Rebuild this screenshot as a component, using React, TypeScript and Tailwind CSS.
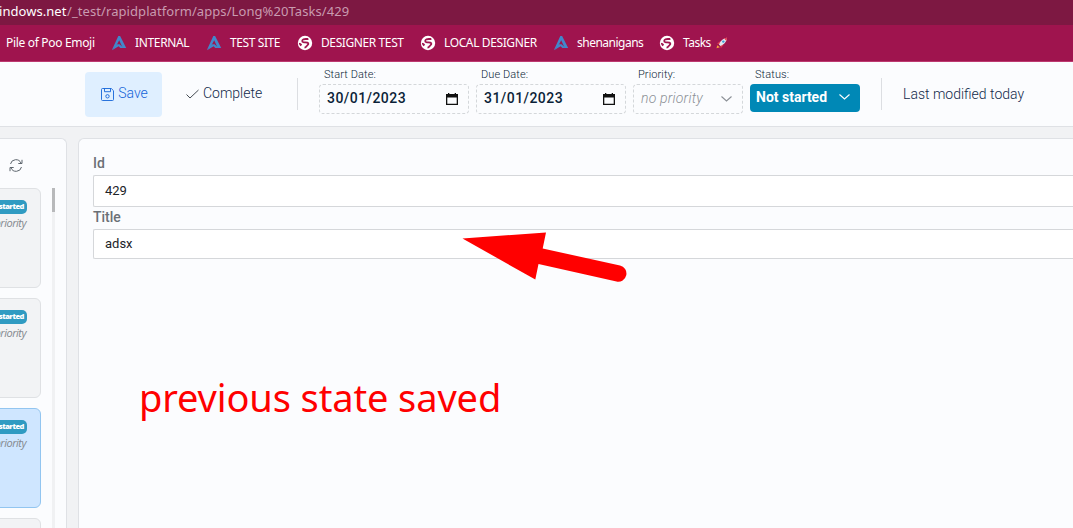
import React from "react";

const Apex = ({ cls }: { cls: string }) => (
  <svg className={`h-4 w-4 shrink-0 ${cls}`} viewBox="0 0 16 16" fill="#4287cb">
    <path d="M.8 15.2 7.3 1h1.8L15.2 13h-3.5L8.2 5.2 4.9 11.6 3 12.8Z" />
    <path d="M6.2 9.3h2.4l4 3.7H9.4L7.6 11.2 1 15.2l2-2.6Z" />
  </svg>
);

const Globe = ({ cls }: { cls: string }) => (
  <svg className={`h-4 w-4 shrink-0 ${cls}`} viewBox="0 0 16 16">
    <circle cx="8" cy="8" r="7.2" fill="#fff" />
    <path d="M11.4 3.8C9.800 4.300 8 3.700 6.500 4.300 5 5 4.700 6.700 6.300 7.200c1.600.4 4.200-.2 5 1 .7 1.500-1.200 2.300-1.900 3.200-.4.700-1 1.200-1.900 1.300" fill="none" stroke="#9f144e" strokeWidth="1.8" />
    <path d="M1.800 7.800c1.400.1 2.800.8 3.300 1.900l-1.500 1.500C2.600 10.500 2 9.200 1.800 7.800Z" fill="#9f144e" />
  </svg>
);

const Rocket = () => (
  <svg className="ml-[5px] h-3 w-3 shrink-0" viewBox="0 0 12 12">
    <path d="M1 6.5 4.5 4l3 4-2.700 3.200-.4-2.200L2.500 7Z" fill="#e23b50" />
    <path d="M3 7.600C4.300 4 7 1.500 11 .8 10.800 4.500 8 7.600 4.600 9Z" fill="#dfe8f0" />
    <path d="M8 1.600 11.200.6l-.8 3.400Z" fill="#e23b50" />
    <circle cx="7.300" cy="4.600" r="1.200" fill="#3a9bd5" />
    <path d="M.5 11.300 1.300 8.300l2.600 1.900Z" fill="#f7a13c" />
  </svg>
);

const Calendar = () => (
  <svg className="h-[13px] w-3 shrink-0" viewBox="0 0 12 13" fill="#111">
    <path d="M0 1h2V0h1.300v1h5.400V0H10v1h2v11H0ZM1.300 4.500v6.300h9.400V4.500Z" />
  </svg>
);

const Chevron = () => (
  <svg className="h-[6px] w-[11px] shrink-0" viewBox="0 0 11 6" fill="none" stroke="currentColor" strokeWidth="1.1">
    <path d="m.5.5 5 4.500 5-4.500" />
  </svg>
);

const Card = ({ active = false }: { active?: boolean }) => (
  <div
    className={`mb-[10px] flex h-[100px] w-[241px] shrink-0 flex-col items-end rounded-[6px] border pt-[11px] pr-[13px] ${
      active ? "border-[#92c5f0] bg-[#cfe6ff]" : "border-[#dfe1e4] bg-[#f2f3f5]"
    }`}
  >
    <span className="flex h-[14px] items-center rounded-[5px] bg-[#309bc2] pr-[3px] pl-2 font-['Open_Sans',sans-serif] text-[7.5px] font-extrabold tracking-[-0.45px] whitespace-nowrap text-white">
      Not started
    </span>
    <span className="pr-px font-['Open_Sans',sans-serif] text-[11px] leading-[17px] font-normal tracking-[-0.5px] whitespace-nowrap text-[#84898e] italic">
      no priority
    </span>
  </div>
);

const DateField = ({ label, value }: { label: string; value: string }) => (
  <div className="mr-[7px] flex w-[150px] shrink-0 flex-col">
    <span className="h-4 pl-[5px] text-[11px] leading-[14px] font-light tracking-[0.1px] text-[#0b1f38]">{label}</span>
    <div className="flex h-[30px] items-center justify-between rounded-[4px] border border-dashed border-[#d4d7da] pr-[10px] pl-[7px]">
      <span className="pb-[2px] text-[14px] font-medium tracking-[0.45px] text-[#0b1f38]">{value}</span>
      <Calendar />
    </div>
  </div>
);

const Bookmark = ({ text, cls }: { text: string; cls: string }) => (
  <span className={`shrink-0 whitespace-nowrap ${cls}`}>{text}</span>
);

export default function App() {
  return (
    <div className="relative flex h-[528px] w-[1073px] flex-col overflow-hidden bg-[#f1f2f4] font-[Roboto,sans-serif] text-[#12294a]">
      <div className="flex h-[25px] shrink-0 items-center bg-[#7d1842] pb-[2px] font-['Noto_Sans',sans-serif] text-[13px] whitespace-nowrap text-[#c99bb0]">
        <span className="-ml-px w-[68px] shrink-0 tracking-[0.05px] text-white">indows.net</span>
        <span className="tracking-[0.08px]">/_test/rapidplatform/apps/Long%20Tasks/429</span>
      </div>
      <div className="flex h-[37px] shrink-0 items-center border-b border-[#bd3970] bg-[#9f144e] font-['Noto_Sans',sans-serif] text-[12px] text-white">
        <Bookmark text="Pile of Poo Emoji" cls="ml-[6px] w-[105px] tracking-[-0.32px]" />
        <Apex cls="mr-[8px]" />
        <Bookmark text="INTERNAL" cls="w-[71px] tracking-[-0.35px]" />
        <Apex cls="mr-[8px]" />
        <Bookmark text="TEST SITE" cls="w-[67px] tracking-[-0.4px]" />
        <Globe cls="mr-[8px]" />
        <Bookmark text="DESIGNER TEST" cls="w-[99px] tracking-[-0.4px]" />
        <Globe cls="mr-[8px]" />
        <Bookmark text="LOCAL DESIGNER" cls="w-[109px] tracking-[-0.38px]" />
        <Apex cls="mr-[8px]" />
        <Bookmark text="shenanigans" cls="w-[82px] tracking-[-0.5px]" />
        <Globe cls="mr-[8px]" />
        <Bookmark text="Tasks" cls="tracking-[-0.5px]" />
        <Rocket />
      </div>
      <div className="flex h-[65px] shrink-0 border-b border-[#dfe1e5] bg-[#fbfcfe] pl-[85px]">
        <button className="mt-[10px] flex h-[45px] w-[77px] shrink-0 items-center justify-center gap-1 rounded-[4px] bg-[#dfefff] pb-[2px] pl-[2px] text-[14px] font-light text-[#1464d8]">
          <svg className="mt-[2px] h-[13px] w-[13px]" viewBox="0 0 13 13" fill="none" stroke="currentColor" strokeWidth="0.9">
            <path d="M1.500.5h8.800l2.200 2.200v8.800a1 1 0 0 1-1 1h-10a1 1 0 0 1-1-1v-10a1 1 0 0 1 1-1ZM3.500.5v3.200h6V.5" />
            <circle cx="6.500" cy="8.300" r="1.700" />
          </svg>
          Save
        </button>
        <button className="mt-[10px] ml-6 flex h-[45px] w-[111px] shrink-0 items-center gap-[4px] pb-[2px] text-[14px] font-light">
          <svg className="h-3 w-[13px]" viewBox="0 0 13 12" fill="none" stroke="#444b52" strokeWidth="1">
            <path d="m.5 6.500 3.500 3.500L12.500 2" />
          </svg>
          Complete
        </button>
        <div className="mt-4 mr-[21px] h-8 w-px shrink-0 bg-[#dcdee2]" />
        <div className="flex pt-[6px]">
          <DateField label="Start Date:" value="30/01/2023" />
          <DateField label="Due Date:" value="31/01/2023" />
          <div className="mr-[7px] flex w-[110px] shrink-0 flex-col">
            <span className="h-4 pl-[5px] text-[11px] leading-[14px] font-light tracking-[0.1px] text-[#0b1f38]">Priority:</span>
            <div className="flex h-[30px] items-center justify-between rounded-[4px] border border-dashed border-[#d4d7da] pr-[10px] pl-[7px] text-[#8b9096]">
              <span className="pb-[2px] text-[14px] font-light tracking-[0.2px] italic">no priority</span>
              <Chevron />
            </div>
          </div>
          <div className="flex w-[110px] shrink-0 flex-col">
            <span className="h-4 pl-[5px] text-[11px] leading-[14px] font-light tracking-[0.1px] text-[#0b1f38]">Status:</span>
            <div className="flex h-[28px] items-center justify-between rounded-[4px] bg-[#0088b6] pr-[10px] pb-[2px] pl-[6px] text-white">
              <span className="text-[14px] font-bold">Not started</span>
              <Chevron />
            </div>
          </div>
        </div>
        <div className="mt-4 ml-[21px] h-8 w-px shrink-0 bg-[#dcdee2]" />
        <span className="mt-4 ml-[21px] text-[14px] leading-8 font-light whitespace-nowrap">Last modified today</span>
      </div>
      <div className="flex h-[401px] shrink-0 pt-[11px]">
        <div className="flex w-[67px] shrink-0 flex-col rounded-tr-[6px] border-t border-r border-[#dfe1e5] bg-[#fbfcfe]">
          <div className="flex h-[49px] shrink-0 pt-5 pl-[9px]">
            <svg className="h-[13px] w-[14px]" viewBox="0 0 14 13" fill="none" stroke="#5d656d" strokeWidth="1">
              <path d="M1.500 5A5.500 5.500 0 0 1 12 4.200M13 .8v3.700H9.300M12.500 8A5.500 5.500 0 0 1 2 8.800M1 12.200V8.500h3.700" />
            </svg>
          </div>
          <div className="flex min-h-0 flex-1">
            <div className="flex w-[52px] shrink-0 flex-col items-start overflow-hidden">
              <div className="-ml-[200px] flex shrink-0 flex-col">
                <Card />
                <Card />
                <Card active />
                <Card />
              </div>
            </div>
            <div className="w-[3px] bg-[#f0f1f3]">
              <div className="h-6 bg-[#b8b9bb]" />
            </div>
          </div>
        </div>
        <div className="ml-[11px] flex w-[995px] shrink-0 flex-col rounded-tl-[6px] border-t border-l border-[#dfe1e5] bg-[#fbfcfe] pl-[14px]">
          <label className="mt-4 h-5 text-[14px] leading-4 font-medium text-[#6b7076]">Id</label>
          <div className="flex h-8 items-center rounded-l-[2px] border border-r-0 border-[#d5d7da] bg-white pl-[11px] text-[13px] font-normal text-[#202328]">429</div>
          <label className="mt-[2px] h-5 text-[14px] leading-4 font-medium text-[#6b7076]">Title</label>
          <div className="flex h-[30px] items-center rounded-l-[2px] border border-r-0 border-[#d5d7da] bg-white pl-[11px] text-[13px] font-normal text-[#202328]">adsx</div>
        </div>
      </div>
      <svg className="absolute top-[230px] left-[460px] h-[56px] w-[170px]" viewBox="460 230 170 56">
        <path d="m462.500 238.500 83.500-6-3.300 16L620 265.500a8 8 0 0 1-3.500 16L538.500 264l-3.200 15.500Z" fill="red" />
      </svg>
      <div className="absolute top-[371px] left-[139px] font-['Noto_Sans',sans-serif] text-[38px] leading-[52px] tracking-[-0.12px] whitespace-nowrap text-[#ff0000]">
        previous state saved
      </div>
    </div>
  );
}
